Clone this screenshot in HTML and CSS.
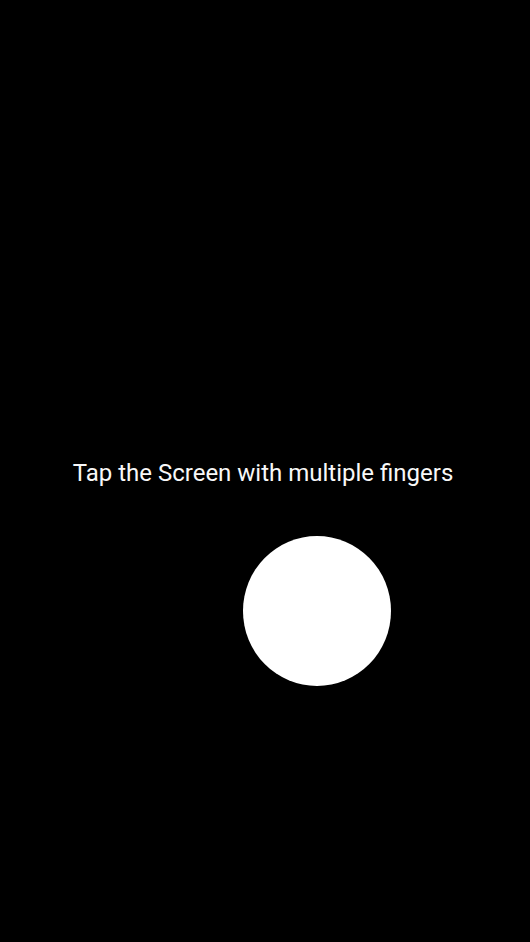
FILE: index.html
```html
<!DOCTYPE html>
<html lang="en">
<head>
<meta charset="utf-8">
<meta name="viewport" content="width=device-width, initial-scale=1">
<title>Multitouch</title>
<link rel="stylesheet" href="styles.css">
</head>
<body>
<main class="screen">
  <p class="hint">Tap the Screen with multiple fingers</p>
  <svg class="touch" viewBox="0 0 148 150" aria-hidden="true"><ellipse cx="74" cy="75" rx="74" ry="75"/></svg>
</main>
</body>
</html>
```

FILE: styles.css
```css
body {
  margin: 0;
  background: #000;
}

.screen {
  position: relative;
  display: flex;
  align-items: center;
  justify-content: center;
  min-height: 100vh;
  overflow: hidden;
  background: #000;
}

.hint {
  margin: 0;
  padding: 4px 4px 0 0;
  color: #f8f8f8;
  font: 24px/32px Roboto, "Liberation Sans", sans-serif;
  text-align: center;
}

/* The finger's contact point, free on the canvas. */
.touch {
  position: absolute;
  top: 536px;
  left: 243px;
  width: 148px;
  height: 150px;
  fill: #fff;
}
```
